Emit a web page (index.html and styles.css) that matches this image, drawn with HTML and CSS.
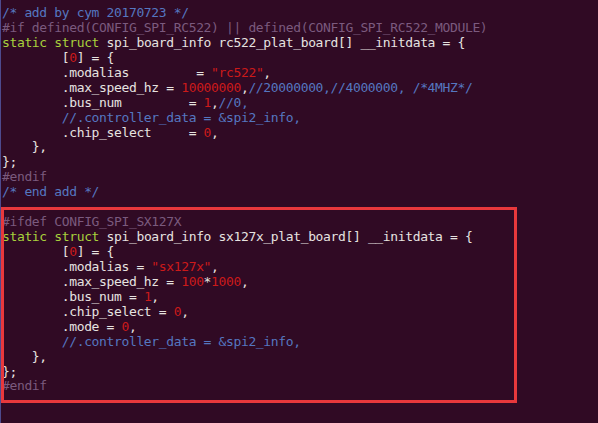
FILE: index.html
```html
<!DOCTYPE html>
<html>
<head>
<meta charset="utf-8">
<link rel="stylesheet" href="styles.css">
</head>
<body>
<div class="term">
<div class="ln"><span class="c">/* add by cym 20170723 */</span></div>
<div class="ln"><span class="p">#if defined(CONFIG_SPI_RC522) || defined(CONFIG_SPI_RC522_MODULE)</span></div>
<div class="ln"><span class="t">static struct</span> spi_board_info rc522_plat_board[] __initdata = {</div>
<div class="ln">        [<span class="n">0</span>] = {</div>
<div class="ln">        .modalias         = <span class="n">"rc522"</span>,</div>
<div class="ln">        .max_speed_hz = <span class="n">10000000</span>,<span class="c">//20000000,//4000000, /*4MHZ*/</span></div>
<div class="ln">        .bus_num         = <span class="n">1</span>,<span class="c">//0,</span></div>
<div class="ln">        <span class="c">//.controller_data = &amp;spi2_info,</span></div>
<div class="ln">        .chip_select     = <span class="n">0</span>,</div>
<div class="ln">    },</div>
<div class="ln">};</div>
<div class="ln"><span class="p">#endif</span></div>
<div class="ln"><span class="c">/* end add */</span></div>
<div class="ln"> </div>
<div class="marked">
<div class="mark-box"></div>
<div class="ln"><span class="p">#ifdef CONFIG_SPI_SX127X</span></div>
<div class="ln"><span class="t">static struct</span> spi_board_info sx127x_plat_board[] __initdata = {</div>
<div class="ln">        [<span class="n">0</span>] = {</div>
<div class="ln">        .modalias = <span class="n">"sx127x"</span>,</div>
<div class="ln">        .max_speed_hz = <span class="n">100</span>*<span class="n">1000</span>,</div>
<div class="ln">        .bus_num = <span class="n">1</span>,</div>
<div class="ln">        .chip_select = <span class="n">0</span>,</div>
<div class="ln">        .mode = <span class="n">0</span>,</div>
<div class="ln">        <span class="c">//.controller_data = &amp;spi2_info,</span></div>
<div class="ln">    },</div>
<div class="ln">};</div>
<div class="ln"><span class="p">#endif</span></div>
</div>
</div>
</body>
</html>
```
FILE: styles.css
```css
html, body {
  margin: 0;
  padding: 0;
  background: #300a24;
}
.term {
  box-sizing: border-box;
  height: 423px;
  overflow: hidden;
  background: #300a24;
  border-left: 1px solid #4d4a8e;
  padding: 6px 0 0 1px;
  font-family: "DejaVu Sans Mono", monospace;
  font-size: 13px;
  letter-spacing: -0.36px;
  line-height: 14.95px;
  color: #e6e3e0;
}
.ln {
  white-space: pre;
  height: 14.95px;
}
.c { color: #5577c0; }
.p { color: #7b5a7e; }
.t { color: #a8d03c; }
.n { color: #cc1a1a; }
.marked {
  position: relative;
}
.mark-box {
  position: absolute;
  left: -1px;
  top: -8px;
  width: 516px;
  height: 196px;
  box-sizing: border-box;
  border: 3px solid #e8383c;
  pointer-events: none;
}
```
